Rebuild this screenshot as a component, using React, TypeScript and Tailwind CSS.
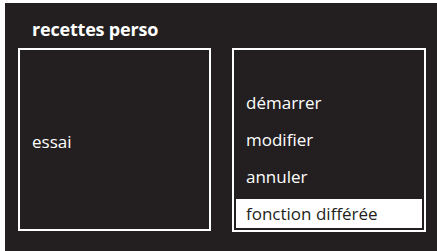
export default function App() {
  const items = ["démarrer", "modifier", "annuler", "fonction différée"];
  return (
    <div className="w-[437px] h-[251px] bg-white flex flex-col pl-[5px] pt-[3px]" style={{ fontFamily: '"Open Sans", "Noto Sans", sans-serif' }}>
      <div className="flex-1 bg-[#231f20] flex flex-col pl-[13px] pr-[11px]">
        <div className="h-[45px] flex items-start pt-[14px] pl-[14px]">
          <span className="text-white font-bold text-[18px] leading-[24px] tracking-[-0.2px]">recettes perso</span>
        </div>
        <div className="flex gap-[21px]">
          <div className="w-[193px] h-[183px] border-2 border-white flex items-center pl-[12px]">
            <span className="text-white text-[17px] leading-[22px] mt-[4px]">essai</span>
          </div>
          <div className="w-[194px] h-[184px] border-2 border-white flex flex-col justify-end gap-[8px] p-[2px]">
            {items.map((it, i) => (
              <div
                key={it}
                className={
                  "h-[29px] flex items-center pl-[10px] text-[17px] leading-[22px] " +
                  (i === items.length - 1 ? "bg-white text-[#231f20]" : "text-white")
                }
              >
                <span className="mt-[1px]">{it}</span>
              </div>
            ))}
          </div>
        </div>
      </div>
    </div>
  );
}
